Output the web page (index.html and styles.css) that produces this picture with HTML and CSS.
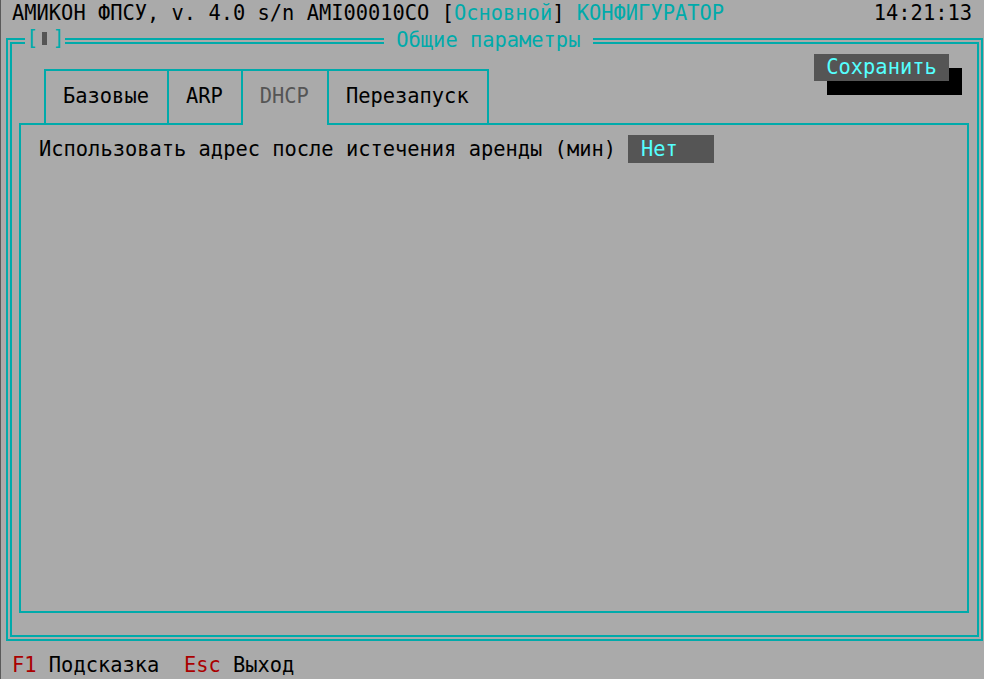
FILE: index.html
```html
<!DOCTYPE html>
<html lang="ru">

<head>
    <meta charset="UTF-8">
    <meta name="viewport" content="width=device-width, initial-scale=1.0">
    <title>АМИКОН ФПСУ - Конфигуратор</title>
    <link rel="stylesheet" href="styles.css">
</head>

<body>
    <div class="screen">
        <div class="top-bar">
            <div class="app-title">АМИКОН ФПСУ, v. 4.0 s/n AMI00010CO [<span class="cyan">Основной</span>] <span class="cyan">КОНФИГУРАТОР</span></div>
            <div class="clock">14:21:13</div>
        </div>

        <div class="window">
            <div class="close-box">[<span class="close-mark"></span>]</div>
            <div class="window-title"> Общие параметры </div>

            <div class="tabs-row">
                <div class="tabs">
                    <div class="tab">Базовые</div>
                    <div class="tab">ARP</div>
                    <div class="tab active">DHCP</div>
                    <div class="tab last">Перезапуск</div>
                </div>
                <button class="save-btn">Сохранить</button>
            </div>

            <div class="tab-panel">
                <div class="field-row">
                    <span class="field-label">Использовать адрес после истечения аренды (мин)</span>
                    <span class="field-value">Нет</span>
                </div>
            </div>
        </div>

        <!-- hotkey hints -->
        <div class="status-bar"><span class="key">F1</span> Подсказка  <span class="key">Esc</span> Выход</div>
    </div>
</body>

</html>
```

FILE: styles.css
```css
* {
    margin: 0;
    padding: 0;
    box-sizing: border-box;
}

body {
    background-color: #aaaaaa;
    font-family: "DejaVu Sans Mono", "Liberation Mono", monospace;
    font-size: 20.4px;
    line-height: 27px;
    color: #000;
}

.screen {
    width: 984px;
    height: 679px;
    border-left: 1px solid #5a5a5a;
    display: flex;
    flex-direction: column;
    overflow: hidden;
}

.cyan {
    color: #00aaaa;
}

.top-bar {
    height: 27px;
    flex-shrink: 0;
    display: flex;
    justify-content: space-between;
    padding: 0 12px 0 11px;
    white-space: pre;
}

.window {
    position: relative;
    flex-shrink: 0;
    margin: 11px 1px 0 5px;
    height: 603px;
    border: 6px double #00aaaa;
    padding: 10px 8px 22px 7px;
    display: flex;
    flex-direction: column;
}

.close-box {
    position: absolute;
    top: -19px;
    left: 13px;
    padding: 0 0 0 1px;
    background-color: #aaaaaa;
    color: #00aaaa;
    display: flex;
    align-items: center;
}

.close-mark {
    display: inline-block;
    width: 5px;
    height: 13px;
    margin: 0 5px 0 4px;
    background-color: #555555;
}

.window-title {
    position: absolute;
    top: -17px;
    left: 372px;
    background-color: #aaaaaa;
    color: #00aaaa;
    white-space: pre;
}

.tabs-row {
    position: relative;
    z-index: 1;
    height: 71px;
    margin-bottom: -2px;
    display: flex;
    justify-content: space-between;
    align-items: flex-end;
}

.tabs {
    display: flex;
    margin-left: 25px;
}

.tab {
    height: 56px;
    padding: 0 18px 4px 17px;
    border-top: 2px solid #00aaaa;
    border-left: 2px solid #00aaaa;
    display: flex;
    align-items: center;
}

.tab.last {
    border-right: 2px solid #00aaaa;
}

.tab.active {
    background-color: #aaaaaa;
    color: #555555;
}

.save-btn {
    align-self: flex-start;
    margin-right: 20px;
    width: 135px;
    height: 27px;
    border: none;
    background-color: #555555;
    color: #55ffff;
    font: inherit;
    line-height: 27px;
    box-shadow: 13px 14px 0 #000;
}

.tab-panel {
    height: 490px;
    border: 2px solid #00aaaa;
    padding: 10px 18px;
}

.field-row {
    display: flex;
    align-items: center;
    gap: 12px;
}

.field-label {
    white-space: pre;
}

.field-value {
    width: 86px;
    height: 28px;
    padding-left: 13px;
    background-color: #555555;
    color: #55ffff;
    line-height: 28px;
}

.status-bar {
    height: 27px;
    flex-shrink: 0;
    margin-top: 11px;
    padding-left: 11px;
    white-space: pre;
}

.key {
    color: #aa0000;
}
```
